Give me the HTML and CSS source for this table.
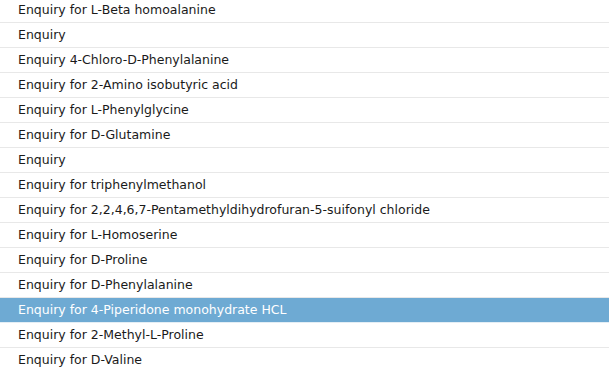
FILE: index.html
```html
<!doctype html>
<html>
  <head>
    <meta charset="utf-8" />
    <title>Enquiries</title>
    <link rel="stylesheet" href="styles.css">
  </head>
  <body>
    <ul class="enquiry-list">
      <li class="enquiry-item">Enquiry for L-Beta homoalanine</li>
      <li class="enquiry-item">Enquiry</li>
      <li class="enquiry-item">Enquiry 4-Chloro-D-Phenylalanine</li>
      <li class="enquiry-item">Enquiry for 2-Amino isobutyric acid</li>
      <li class="enquiry-item">Enquiry for L-Phenylglycine</li>
      <li class="enquiry-item">Enquiry for D-Glutamine</li>
      <li class="enquiry-item">Enquiry</li>
      <li class="enquiry-item">Enquiry for triphenylmethanol</li>
      <li class="enquiry-item">Enquiry for 2,2,4,6,7-Pentamethyldihydrofuran-5-suifonyl chloride</li>
      <li class="enquiry-item">Enquiry for L-Homoserine</li>
      <li class="enquiry-item">Enquiry for D-Proline</li>
      <li class="enquiry-item">Enquiry for D-Phenylalanine</li>
      <li class="enquiry-item active">Enquiry for 4-Piperidone monohydrate HCL</li>
      <li class="enquiry-item">Enquiry for 2-Methyl-L-Proline</li>
      <li class="enquiry-item">Enquiry for D-Valine</li>
    </ul>
  </body>
</html>
```

FILE: styles.css
```css
* {
  margin: 0;
  padding: 0;
  box-sizing: border-box;
}
html,
body {
  background: #ffffff;
  overflow: hidden;
}
body {
  font-family: "DejaVu Sans", Verdana, sans-serif;
  font-size: 12.5px;
  color: #1a1a1a;
}
.enquiry-list {
  list-style: none;
  margin-top: -2px;
}
.enquiry-item {
  height: 25px;
  line-height: 24px;
  padding-left: 18px;
  border-bottom: 1px solid #e8e8e8;
  white-space: nowrap;
}
.enquiry-item.active {
  background: #6eaad3;
  color: #ffffff;
  border-bottom-color: #e4eef5;
}
```
